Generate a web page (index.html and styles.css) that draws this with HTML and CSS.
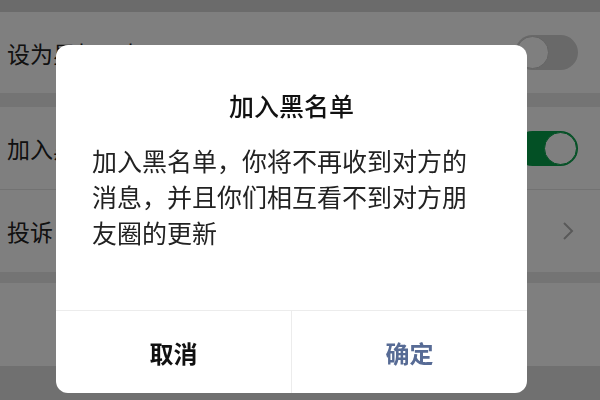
FILE: index.html
```html
<!DOCTYPE html>
<html lang="zh-CN">
<head>
    <meta charset="UTF-8">
    <meta name="viewport" content="width=device-width, initial-scale=1.0">
    <title>加入黑名单</title>
    <link rel="stylesheet" href="styles.css">
</head>
<body>
<div class="page">
    <div class="top-band"></div>
    <div class="cell cell-first">
        <span class="cell-label">设为星标朋友</span>
        <span class="switch"></span>
    </div>
    <div class="gap gap-a"></div>
    <div class="cell cell-line">
        <span class="cell-label">加入黑名单</span>
        <span class="switch switch-on"></span>
    </div>
    <div class="cell">
        <span class="cell-label">投诉</span>
        <svg class="chevron" width="12" height="20" viewBox="0 0 12 20">
            <path d="M2 2 L10 10 L2 18" fill="none" stroke="#b2b2b2" stroke-width="2"/>
        </svg>
    </div>
    <div class="gap gap-b"></div>
    <div class="cell cell-last"></div>
</div>

<!-- dim layer over the settings list -->
<div class="mask"></div>

<div class="dialog">
    <h2 class="dialog-title">加入黑名单</h2>
    <p class="dialog-text">加入黑名单，你将不再收到对方的消息，并且你们相互看不到对方朋友圈的更新</p>
    <div class="dialog-actions">
        <div class="btn btn-cancel">取消</div>
        <div class="btn btn-ok">确定</div>
    </div>
</div>
</body>
</html>
```

FILE: styles.css
```css
/* General */
body {
    margin: 0;
    padding: 0;
    width: 600px;
    height: 400px;
    overflow: hidden;
    background-color: #e0e0e0;
    font-family: "Noto Sans CJK SC", "Noto Sans", sans-serif;
}

/* Settings list underneath */
.page {
    display: flex;
    flex-direction: column;
}

.top-band {
    height: 12px;
    background-color: #d6d6d6;
}

.gap {
    background-color: #e8e8e8;
}

.gap-a {
    height: 14px;
}

.gap-b {
    height: 11px;
}

.cell {
    display: flex;
    align-items: center;
    justify-content: space-between;
    height: 82px;
    padding: 0 22px 0 7px;
    background-color: #ffffff;
    box-sizing: border-box;
}

.cell-first {
    height: 81px;
}

.cell-line {
    height: 83px;
    border-bottom: 1px solid #e4e4e4;
}

.cell-last {
    height: 83px;
}

.cell-label {
    font-size: 23px;
    color: #222;
}

.switch {
    position: relative;
    width: 63px;
    height: 35px;
    border-radius: 18px;
    background-color: #d2d2d2;
}

.switch::after {
    content: "";
    position: absolute;
    top: 1px;
    left: 1px;
    width: 31px;
    height: 31px;
    border-radius: 50%;
    background-color: #ffffff;
    border: 1px solid #c8c8c8;
}

.switch-on {
    background-color: #07a04a;
}

.switch-on::after {
    left: auto;
    right: 1px;
    border-color: #07a04a;
}

.chevron {
    margin-right: 4px;
}

/* Dim layer */
.mask {
    position: fixed;
    inset: 0;
    background-color: rgba(0, 0, 0, 0.5);
}

/* Dialog */
.dialog {
    position: fixed;
    top: 45px;
    left: 56px;
    width: 471px;
    height: 348px;
    display: flex;
    flex-direction: column;
    background-color: #ffffff;
    border-radius: 12px;
    overflow: hidden;
}

.dialog-title {
    margin: 42px 0 0;
    font-size: 25px;
    line-height: 36px;
    font-weight: 500;
    text-align: center;
    color: #111;
}

.dialog-text {
    margin: 19px 0 0;
    padding: 0 36px;
    font-size: 25px;
    line-height: 36px;
    color: #222;
}

.dialog-actions {
    display: flex;
    margin-top: auto;
    height: 82px;
    border-top: 1px solid #ececec;
}

.btn {
    flex: 1;
    display: flex;
    align-items: center;
    justify-content: center;
    font-size: 24px;
    font-weight: 700;
}

.btn-cancel {
    color: #111;
    border-right: 1px solid #ececec;
}

.btn-ok {
    color: #576b95;
}
```
